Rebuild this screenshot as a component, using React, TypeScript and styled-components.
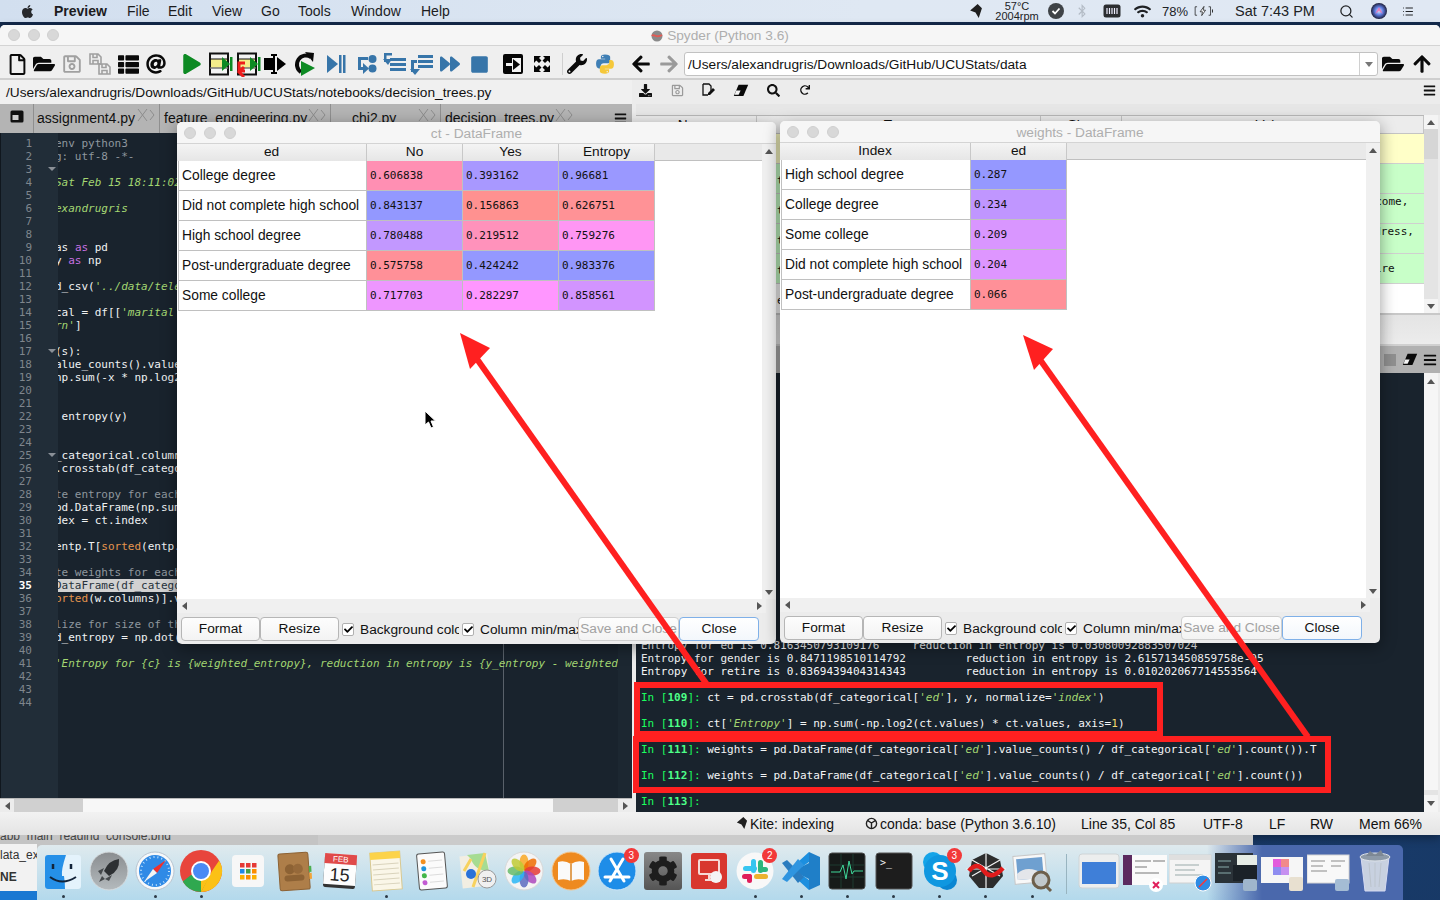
import React, { FC, ReactNode } from 'react';
import styled, { createGlobalStyle } from 'styled-components';
import {
  FaApple,
  FaAt,
  FaBars,
  FaBluetoothB,
  FaCog,
  FaDownload,
  FaFolderOpen,
  FaForward,
  FaPlay,
  FaRedo,
  FaRegFile,
  FaRegSave,
  FaSearch,
  FaStop,
  FaThList,
  FaWifi,
  FaWrench,
  FaArrowLeft,
  FaArrowRight,
  FaArrowUp,
  FaCheck
} from 'react-icons/fa';
import { Search, List } from 'lucide-react';

const SANS = "'Liberation Sans', Arial, sans-serif";
const MONO = "'DejaVu Sans Mono', 'Liberation Mono', monospace";

const GlobalStyle = createGlobalStyle`
  html, body { margin: 0; padding: 0; background: #17304f; }
  #root { width: 1440px; height: 900px; overflow: hidden; }
  * { box-sizing: border-box; }
`;

const Desktop = styled.div`
  position: relative;
  width: 1440px;
  height: 900px;
  overflow: hidden;
  font-family: ${SANS};
  background: radial-gradient(circle at 1400px 860px, #183a68, #14294a 60%);
`;

/* ---------- menu bar ---------- */

const MenuBar = styled.div`
  position: absolute;
  top: 0;
  left: 0;
  width: 1440px;
  height: 22px;
  display: flex;
  align-items: center;
  background: linear-gradient(90deg, #d2dfef, #dfe8f3 60%, #e0e8f3);
  color: #1c1c1e;
  font-size: 14px;
`;

const AppleSlot = styled.div`
  width: 54px;
  padding-left: 20px;
  display: flex;
  align-items: center;
  font-size: 15px;
  color: #26282c;
`;

const MenuItem = styled.span<{ $width: number; $bold?: boolean }>`
  width: ${p => p.$width}px;
  font-weight: ${p => (p.$bold ? 700 : 400)};
`;

const StatusTray = styled.div`
  margin-left: auto;
  display: flex;
  align-items: center;
  height: 22px;
  padding-right: 26px;
  color: #202225;
`;

const TraySlot = styled.div<{ $width: number; $muted?: boolean }>`
  flex: none;
  width: ${p => p.$width}px;
  display: flex;
  align-items: center;
  justify-content: center;
  color: ${p => (p.$muted ? '#b4bcc6' : '#202225')};
`;

const TempReadout = styled.div`
  flex: none;
  font-size: 11px;
  line-height: 10px;
  text-align: center;
  width: 54px;
`;

const TrayText = styled.span<{ $size: number }>`
  font-size: ${p => p.$size}px;
  white-space: nowrap;
`;

/* ---------- main window ---------- */

const SpyderWindow = styled.div`
  position: absolute;
  left: 0;
  top: 25px;
  width: 1440px;
  height: 810px;
  display: flex;
  flex-direction: column;
  border-radius: 5px 5px 0 0;
  background: #ececec;
  overflow: hidden;
  box-shadow: 0 3px 10px rgba(0, 0, 0, 0.35);
`;

const TitleBar = styled.div<{ $height: number }>`
  position: relative;
  flex: none;
  height: ${p => p.$height}px;
  padding-top: 1px;
  display: flex;
  align-items: center;
  justify-content: center;
  gap: 4px;
  background: #f6f6f6;
  border-bottom: 1px solid #d4d4d4;
  color: #aeaeae;
  font-size: 13.7px;
`;

const Lights = styled.div<{ $left: number; $gap: number }>`
  position: absolute;
  left: ${p => p.$left}px;
  top: 50%;
  transform: translateY(-50%);
  display: flex;
  gap: ${p => p.$gap}px;
`;

const Light = styled.i`
  display: block;
  width: 12px;
  height: 12px;
  border-radius: 50%;
  background: #d8d8d8;
  border: 1px solid #cfcfcf;
`;

const MainToolbar = styled.div`
  flex: none;
  height: 34px;
  display: flex;
  align-items: center;
  padding: 4px 0 0 3px;
  background: #efefef;
  border-bottom: 2px solid #cfcfcf;
`;

const ToolSlot = styled.div<{ $mark?: number; $color?: string; $size?: number }>`
  flex: none;
  width: 28px;
  height: 28px;
  margin-left: ${p => p.$mark || 0}px;
  display: flex;
  align-items: center;
  justify-content: center;
  color: ${p => p.$color || '#0a0a0a'};
  font-size: ${p => p.$size || 20}px;
`;

const ToolDivider = styled.div`
  flex: none;
  width: 1px;
  height: 22px;
  margin-left: 6px;
  background: #cfcfcf;
`;

const PathCombo = styled.div`
  flex: none;
  width: 694px;
  height: 24px;
  margin-left: 1px;
  display: flex;
  align-items: center;
  justify-content: space-between;
  background: #fff;
  border: 1px solid #c2c2c2;
  border-radius: 3px;
  padding-left: 3px;
  font-size: 13.7px;
  color: #111;
`;

const ComboArrow = styled.div`
  width: 18px;
  height: 22px;
  border-left: 1px solid #d0d0d0;
  display: flex;
  align-items: center;
  justify-content: center;
  &::after {
    content: '';
    border-left: 4px solid transparent;
    border-right: 4px solid transparent;
    border-top: 5px solid #777;
  }
`;

const Panes = styled.div`
  flex: 1;
  display: flex;
  min-height: 0;
`;

const LeftPane = styled.div`
  flex: none;
  width: 632px;
  display: flex;
  flex-direction: column;
`;

const RightPane = styled.div`
  flex: none;
  width: 804px;
  margin-left: 4px;
  display: flex;
  flex-direction: column;
`;

const FilePath = styled.div`
  flex: none;
  height: 24px;
  padding-left: 6px;
  display: flex;
  align-items: center;
  font-size: 13.7px;
  color: #111;
  background: #f0f0f0;
`;

const TabBar = styled.div`
  flex: none;
  height: 29px;
  display: flex;
  background: #b4b4b4;
  position: relative;
  font-size: 14px;
  color: #111;
`;

const BrowseTab = styled.div`
  width: 33px;
  display: flex;
  align-items: flex-start;
  justify-content: center;
  padding-top: 6px;
`;

const EditorTab = styled.div<{ $width: number; $pad: number }>`
  position: relative;
  width: ${p => p.$width}px;
  padding: 6px 0 0 ${p => p.$pad}px;
  border-left: 1px solid #8f8f8f;
  white-space: nowrap;
  &:last-of-type {
    border-right: 1px solid #8f8f8f;
  }
`;

const TabClose = styled.svg`
  position: absolute;
  right: 4px;
  top: 4px;
`;

const TabMenu = styled.div`
  position: absolute;
  left: 614px;
  top: 8px;
  font-size: 13px;
  line-height: 13px;
`;

const Editor = styled.div`
  flex: 1;
  min-height: 0;
  display: flex;
  background: #19232d;
  font-family: ${MONO};
  font-size: 11px;
  line-height: 13px;
  overflow: hidden;
`;

const Gutter = styled.div`
  flex: none;
  width: 58px;
  padding: 4px 0 0 0;
  background: #212d38;
  border-left: 1px solid #10171e;
`;

const LineNumber = styled.div<{ $active?: boolean; $fold?: boolean }>`
  position: relative;
  height: 13px;
  width: 31px;
  text-align: right;
  color: ${p => (p.$active ? '#ffffff' : '#7f868d')};
  font-weight: ${p => (p.$active ? 700 : 400)};
  &::after {
    content: '';
    display: ${p => (p.$fold ? 'block' : 'none')};
    position: absolute;
    left: 47px;
    top: 4px;
    border-left: 4px solid transparent;
    border-right: 4px solid transparent;
    border-top: 4px solid #8a9097;
  }
`;

const CodeArea = styled.div`
  position: relative;
  flex: 1;
  min-width: 0;
  padding-top: 4px;
  overflow: hidden;
  color: #f0f2f3;
`;

const FlagStrip = styled.div`
  flex: none;
  width: 14px;
  background: #1c2731;
`;

const EdgeLine = styled.div`
  position: absolute;
  left: 445px;
  top: 0;
  bottom: 0;
  width: 1px;
  background: #59616a;
`;

const CodeLine = styled.div<{ $active?: boolean }>`
  position: relative;
  height: 13px;
  margin-left: -3px;
  white-space: pre;
  background: ${p => (p.$active ? '#d2d2d2' : 'transparent')};
  color: ${p => (p.$active ? '#26313b' : 'inherit')};
`;

const Kw = styled.span`
  color: #c670e0;
`;
const Str = styled.span`
  color: #a3d672;
  font-style: italic;
`;
const Fn = styled.span`
  color: #e6954e;
`;
const Cm = styled.span`
  color: #8f979e;
`;
const Num = styled.span`
  color: #f5d76e;
`;

const HScroll = styled.div`
  flex: none;
  height: 14px;
  display: flex;
  background: #d6d6d6;
  border-top: 1px solid #b9b9b9;
`;

const ScrollEnd = styled.div<{ $dir: 'left' | 'right' | 'up' | 'down'; $bg?: string; $size?: number }>`
  flex: none;
  width: ${p => (p.$dir === 'up' || p.$dir === 'down' ? '100%' : `${p.$size || 14}px`)};
  height: ${p => (p.$dir === 'up' || p.$dir === 'down' ? `${p.$size || 14}px` : 'auto')};
  display: flex;
  align-items: center;
  justify-content: center;
  background: ${p => p.$bg || '#ececec'};
  &::after {
    content: '';
    border: 4px solid transparent;
    ${p => (p.$dir === 'left' ? 'border-right: 5px solid #555; border-left: 0;' : '')}
    ${p => (p.$dir === 'right' ? 'border-left: 5px solid #555; border-right: 0;' : '')}
    ${p => (p.$dir === 'up' ? 'border-bottom: 5px solid #555; border-top: 0;' : '')}
    ${p => (p.$dir === 'down' ? 'border-top: 5px solid #555; border-bottom: 0;' : '')}
  }
`;

const ScrollTrack = styled.div`
  flex: 1;
  display: flex;
`;

const ScrollGap = styled.div<{ $width: number }>`
  flex: none;
  width: ${p => p.$width}px;
  background: #d0d0d0;
`;

const ScrollThumb = styled.div<{ $width?: number }>`
  flex: ${p => (p.$width ? 'none' : 1)};
  width: ${p => (p.$width ? `${p.$width}px` : 'auto')};
  background: #f7f7f7;
`;

/* ---------- right pane ---------- */

const PaneIcons = styled.div`
  flex: none;
  height: 24px;
  display: flex;
  align-items: center;
  padding-bottom: 4px;
  background: #ececec;
  font-size: 13px;
  color: #111;
`;

const PaneIcon = styled.div<{ $width?: number; $color?: string; $mark?: number }>`
  flex: none;
  width: ${p => p.$width || 32}px;
  margin-left: ${p => p.$mark || 0}px;
  display: flex;
  justify-content: center;
  color: ${p => p.$color || '#111'};
`;

const PaneMenu = styled.div`
  margin-left: auto;
  padding-right: 4px;
  display: flex;
`;

const PaneGap = styled.div`
  flex: none;
  height: 11px;
  background: #e6e6e6;
`;

const VarWrap = styled.div`
  flex: none;
  height: 198px;
  display: flex;
  padding-right: 2px;
  background: #ececec;
`;

const VarTable = styled.div`
  flex: 1;
  display: flex;
  flex-direction: column;
  background: #fff;
  border-top: 1px solid #b8b8b8;
  overflow: hidden;
`;

const VarHead = styled.div`
  flex: none;
  height: 18px;
  display: grid;
  grid-template-columns: 121px 284px 81px 1fr;
  background: #ececec;
  border-bottom: 1px solid #c4c4c4;
  font-size: 13.7px;
  color: #111;
`;

const VarHeadCell = styled.div`
  text-align: center;
  padding-top: 1px;
  border-right: 1px solid #c4c4c4;
`;

const VarRow = styled.div<{ $bg: string }>`
  flex: none;
  height: 30px;
  display: grid;
  grid-template-columns: 121px 284px 81px 1fr;
  background: ${p => p.$bg};
  border-bottom: 1px solid #d0d0d0;
  font-family: ${MONO};
  font-size: 11px;
  color: #111;
`;

const VarCell = styled.div<{ $pad?: number; $top?: number }>`
  padding-left: ${p => p.$pad || 0}px;
  padding-top: ${p => p.$top || 8}px;
  white-space: nowrap;
  overflow: hidden;
`;

const VScroll = styled.div<{ $bg?: string }>`
  flex: none;
  width: 14px;
  display: flex;
  flex-direction: column;
  background: ${p => p.$bg || '#e4e4e4'};
  align-items: center;
`;

const VThumb = styled.div<{ $height: number; $bg?: string }>`
  flex: none;
  width: 14px;
  height: ${p => p.$height}px;
  background: ${p => p.$bg || '#f6f6f6'};
`;

const VFill = styled.div`
  flex: 1;
  width: 14px;
`;

const PaneTabs = styled.div`
  flex: none;
  height: 33px;
  background: linear-gradient(#e4e4e4, #ececec);
  border-top: 2px solid #c8c8c8;
  border-bottom: 2px solid #d0d0d0;
`;

const ConsoleTools = styled.div`
  flex: none;
  height: 27px;
  display: flex;
  align-items: center;
  justify-content: flex-end;
  gap: 5px;
  padding-right: 3px;
  background: #b1b1b1;
  font-size: 14px;
  color: #0a0a0a;
`;

const GreySquare = styled.div`
  width: 12px;
  height: 12px;
  background: #8f8f8f;
  margin-right: 1px;
`;

const ConsoleWrap = styled.div`
  flex: 1;
  min-height: 0;
  display: flex;
  padding-right: 2px;
  background: #ececec;
`;

const ConsoleBody = styled.div`
  flex: 1;
  display: flex;
  flex-direction: column;
  justify-content: flex-end;
  padding: 0 0 4px 5px;
  background: #19232d;
  color: #f4f5f6;
  font-family: ${MONO};
  font-size: 11px;
  line-height: 13px;
  white-space: pre;
  overflow: hidden;
`;

const ConsoleLine = styled.div`
  height: 13px;
`;

const Prompt = styled.span`
  color: #1aff5e;
  b {
    color: #4dff88;
    font-weight: 700;
  }
`;

const StatusBar = styled.div`
  flex: none;
  height: 23px;
  display: flex;
  align-items: center;
  background: linear-gradient(#f2f2f2, #e4e4e4);
  font-size: 14px;
  color: #111;
  padding-left: 735px;
`;

const StatusItem = styled.span<{ $width: number }>`
  flex: none;
  width: ${p => p.$width}px;
  display: flex;
  align-items: center;
  gap: 2px;
  white-space: nowrap;
`;

/* ---------- data frame windows ---------- */

const FrameWindow = styled.div<{ $left: number; $top: number; $width: number; $height: number }>`
  position: absolute;
  left: ${p => p.$left}px;
  top: ${p => p.$top}px;
  width: ${p => p.$width}px;
  height: ${p => p.$height}px;
  display: flex;
  flex-direction: column;
  background: #ececec;
  border-radius: 5px;
  overflow: hidden;
  box-shadow: 0 4px 16px rgba(0, 0, 0, 0.4);
`;

const FrameBody = styled.div`
  flex: 1;
  min-height: 0;
  display: flex;
`;

const FrameTableArea = styled.div`
  flex: 1;
  display: flex;
  flex-direction: column;
  background: #fff;
`;

const FrameHead = styled.div`
  flex: none;
  height: 17px;
  background: #e9e9e9;
  display: flex;
  border-bottom: 1px solid #c0c0c0;
`;

const FrameHeadCell = styled.div<{ $width: number }>`
  flex: none;
  width: ${p => p.$width}px;
  height: 17px;
  font-size: 13.7px;
  line-height: 16px;
  color: #111;
  text-align: center;
  background: linear-gradient(#f4f4f4, #e6e6e6);
  border-right: 1px solid #c8c8c8;
`;

const FrameGrid = styled.div<{ $cols: string }>`
  display: grid;
  grid-template-columns: ${p => p.$cols};
  grid-auto-rows: 30px;
  margin-left: 1px;
  width: max-content;
`;

const LabelCell = styled.div`
  display: flex;
  align-items: center;
  padding-left: 3px;
  font-size: 13.8px;
  color: #111;
  background: #fff;
  border-right: 1px solid #c0c0c0;
  border-bottom: 1px solid #c0c0c0;
  border-left: 1px solid #c0c0c0;
  white-space: nowrap;
`;

const ValueCell = styled.div<{ $bg: string }>`
  display: flex;
  align-items: center;
  padding-left: 3px;
  font-family: ${MONO};
  font-size: 11px;
  color: #111;
  background: ${p => p.$bg};
  border-right: 1px solid #c0c0c0;
  border-bottom: 1px solid #c0c0c0;
`;

const FrameHScroll = styled.div`
  flex: none;
  height: 14px;
  display: flex;
  margin-right: 10px;
  background: #f0f0f0;
`;

const FrameFoot = styled.div`
  flex: none;
  height: 31px;
  display: flex;
  align-items: flex-start;
  padding: 4px 0 0 4px;
`;

const FrameButton = styled.div<{ $width: number; $disabled?: boolean; $focus?: boolean }>`
  flex: none;
  width: ${p => p.$width}px;
  height: 24px;
  line-height: 22px;
  font-size: 13.7px;
  text-align: center;
  white-space: nowrap;
  overflow: hidden;
  color: ${p => (p.$disabled ? '#a2a2a2' : '#111')};
  background: ${p => (p.$focus ? 'linear-gradient(#fff, #f3f7fc)' : 'linear-gradient(#fdfdfd, #f3f3f3)')};
  border: 1px solid ${p => (p.$focus ? '#7fb0e8' : p.$disabled ? '#cfcfcf' : '#b6b6b6')};
  border-radius: 4px;
`;

const CheckItem = styled.div<{ $width: number }>`
  flex: none;
  width: ${p => p.$width}px;
  height: 24px;
  display: flex;
  align-items: center;
  gap: 6px;
  padding-left: 3px;
  font-size: 13.7px;
  color: #111;
  overflow: hidden;
  white-space: nowrap;
`;

const CheckBox = styled.span`
  flex: none;
  width: 12px;
  height: 13px;
  display: flex;
  align-items: center;
  justify-content: center;
  background: #fff;
  border: 1px solid #b0b0b0;
  border-radius: 2px;
  font-size: 9px;
  color: #000;
`;

const Pointer = styled.svg`
  position: absolute;
  left: 424px;
  top: 410px;
`;

/* ---------- annotations ---------- */

const Annotations = styled.svg`
  position: absolute;
  left: 0;
  top: 0;
  pointer-events: none;
`;

/* ---------- behind the dock ---------- */

const BackWindow = styled.div`
  position: absolute;
  left: 0;
  top: 835px;
  width: 1253px;
  height: 65px;
  background: linear-gradient(90deg, #c4c4c4 318px, #cbcbcb 318px);
`;

const FinderSidebar = styled.div`
  position: absolute;
  left: 0;
  top: 9px;
  width: 37px;
  height: 56px;
  background: #f2f2f2;
  font-size: 12px;
  color: #333;
  overflow: hidden;
`;

const FileLabel = styled.div<{ $bold?: boolean; $top: number }>`
  position: absolute;
  left: 0;
  top: ${p => p.$top}px;
  font-weight: ${p => (p.$bold ? 700 : 400)};
  white-space: nowrap;
`;

const SelectedRow = styled.div`
  position: absolute;
  left: 0;
  top: 47px;
  width: 37px;
  height: 9px;
  background: #1a78d2;
`;

const ClippedFile = styled.div`
  position: absolute;
  left: 0;
  top: 0;
  width: 200px;
  height: 5px;
  overflow: hidden;
  font-size: 12px;
  line-height: 2px;
  color: #444;
`;

/* ---------- dock ---------- */

const Dock = styled.div`
  position: absolute;
  left: 37px;
  top: 845px;
  width: 1366px;
  height: 55px;
  display: flex;
  align-items: flex-start;
  padding: 3px 0 0 3px;
  border-radius: 5px 5px 0 0;
  background: linear-gradient(90deg, rgba(74, 104, 172, 0) 1170px, #4a68ac 1225px),
    linear-gradient(#dfeaee, #b3d9ec);
`;

const DockItem = styled.div<{ $dot?: boolean; $width?: number }>`
  position: relative;
  flex: none;
  width: ${p => p.$width || 46.15}px;
  height: 46px;
  display: flex;
  align-items: center;
  justify-content: center;
  &::after {
    content: '';
    display: ${p => (p.$dot ? 'block' : 'none')};
    position: absolute;
    left: 50%;
    bottom: -4px;
    width: 3px;
    height: 3px;
    margin-left: -1.5px;
    border-radius: 50%;
    background: #2c3a46;
  }
`;

const Badge = styled.span`
  position: absolute;
  right: 1px;
  top: 0;
  width: 15px;
  height: 15px;
  border-radius: 50%;
  background: #f2393a;
  color: #fff;
  font-size: 10px;
  line-height: 15px;
  text-align: center;
`;

const DockSep = styled.div`
  flex: none;
  width: 1px;
  height: 40px;
  margin: 6px 9.5px 0 10.5px;
  background: #98b4c0;
`;

const DockTile = styled.div<{ $bg: string; $color: string; $size?: number }>`
  width: ${p => p.$size || 38}px;
  height: ${p => p.$size || 38}px;
  border-radius: 3px;
  display: flex;
  align-items: center;
  justify-content: center;
  background: ${p => p.$bg};
  color: ${p => p.$color};
`;

/* ---------- small icons ---------- */

const RunCellIcon: FC<{ advance?: boolean }> = ({ advance }) => (
  <svg width="28" height="26" viewBox="0 0 28 26">
    <rect x="3" y="2.5" width="18" height="21" fill="#f4f4f4" stroke="#111" strokeWidth="2" />
    <rect x="4" y="8" width="16" height="9" fill="#f4ec8a" />
    <line x1="3" y1="8" x2="21" y2="8" stroke="#111" />
    <line x1="3" y1="17" x2="21" y2="17" stroke="#777" strokeWidth="1.5" />
    <polygon points="15,6 23,13 15,20" fill="#0d8a23" />
    <rect x="23" y="6" width="2.5" height="14" fill="#0d8a23" />
    {advance && (
      <path d="M10 12 H4 V20 H10 M9 16 L4 21 L9 26" fill="none" stroke="#ee1c1c" strokeWidth="3" />
    )}
  </svg>
);

const RunSelectionIcon = () => (
  <svg width="26" height="22" viewBox="0 0 26 22">
    <rect x="2" y="5" width="9" height="12" fill="#000" />
    <polygon points="15,4 24,11 15,18" fill="#000" />
    <path d="M9 2 H15 M12 2 V20 M9 20 H15" stroke="#000" strokeWidth="2" fill="none" />
  </svg>
);

const DebugIcon = () => (
  <svg width="26" height="26" viewBox="0 0 26 26">
    <path d="M20 6 A9 9 0 1 0 10 21" fill="none" stroke="#0a0a0a" strokeWidth="4" />
    <polygon points="14,1 23,2 22,11" fill="#0a0a0a" />
    <polygon points="10,10 24,17 10,25" fill="#0d8a23" />
  </svg>
);

const StepIcon = () => (
  <svg width="22" height="22" viewBox="0 0 22 22" fill="#3775a9">
    <polygon points="2,2 13,11 2,20" />
    <rect x="14" y="2" width="2.5" height="18" />
    <rect x="18" y="2" width="2.5" height="18" />
  </svg>
);

const StepInIcon = () => (
  <svg width="22" height="22" viewBox="0 0 22 22" fill="#3775a9">
    <rect x="2" y="4" width="10" height="3" />
    <rect x="2" y="4" width="3" height="13" />
    <rect x="2" y="14" width="7" height="3" />
    <polygon points="7,10 13,15.5 7,21" />
    <circle cx="16.5" cy="6" r="4" />
    <circle cx="16.5" cy="15.5" r="4" />
  </svg>
);

const StepIntoIcon = () => (
  <svg width="24" height="22" viewBox="0 0 24 22" fill="#3775a9">
    <polygon points="1,0 9,0 9,2.5 3.5,2.5 3.5,9 1,9" />
    <polygon points="0,6 5,12 9,6" />
    <rect x="7" y="5" width="16" height="3" />
    <rect x="7" y="10" width="16" height="3" />
    <rect x="7" y="15" width="16" height="3" />
  </svg>
);

const StepOutIcon = () => (
  <svg width="24" height="24" viewBox="0 0 24 24" fill="#3775a9">
    <rect x="8" y="3" width="15" height="3" />
    <rect x="8" y="8" width="15" height="3" />
    <rect x="8" y="13" width="15" height="3" />
    <rect x="1" y="8" width="3" height="12" />
    <rect x="1" y="8" width="6" height="3" />
    <polygon points="0,17 5,23 10,17" />
  </svg>
);

const MaximizeIcon = () => (
  <svg width="24" height="24" viewBox="0 0 24 24">
    <rect x="2" y="2" width="20" height="20" rx="2" fill="#050505" />
    <rect x="11" y="6" width="9" height="14" fill="#f2f2f2" />
    <rect x="5" y="11" width="7" height="3" fill="#f2f2f2" />
    <polygon points="12,7 19,12.5 12,18" fill="#050505" />
  </svg>
);

const FullscreenIcon = () => (
  <svg width="20" height="20" viewBox="0 0 20 20" fill="#050505">
    <polygon points="2,2 9,2 7,4 9.5,6.5 7,9 4.3,6.5 2,9" />
    <polygon points="18,2 11,2 13,4 10.5,6.5 13,9 15.7,6.5 18,9" />
    <polygon points="2,18 9,18 7,16 9.5,13.5 7,11 4.3,13.5 2,11" />
    <polygon points="18,18 11,18 13,16 10.5,13.5 13,11 15.7,13.5 18,11" />
  </svg>
);

const SaveAllIcon = () => (
  <svg width="24" height="24" viewBox="0 0 24 24" fill="none" stroke="#a0a0a0" strokeWidth="1.6">
    <path d="M2 2 H10 L13 5 V12 H2 Z M5 2 V5.5 H9 V2 M5 12 V8.5 H10 V12" />
    <path d="M11 12 H19 L22 15 V22 H11 Z M14 12 V15.5 H18 V12 M14 22 V18.5 H19 V22" />
  </svg>
);

const EraserIcon: FC<{ size?: number }> = ({ size = 16 }) => (
  <svg width={size} height={size * 0.8} viewBox="0 0 20 16">
    <polygon points="7,1 19,1 13,15 1,15" fill="#0a0a0a" />
    <polygon points="4,8 9.5,8 7,13.5 2,13.5" fill="#f4f4f4" />
  </svg>
);

const DocEditIcon = () => (
  <svg width="14" height="14" viewBox="0 0 14 14">
    <path d="M1 1 H7 L9 3 V8 M1 1 V12 H6" fill="none" stroke="#111" strokeWidth="1.3" />
    <polygon points="11,5 13,7 8,12 6,12 6,10" fill="#111" />
  </svg>
);

const CloseGlyph = () => (
  <TabClose width="18" height="14" viewBox="0 0 18 14" fill="none" stroke="#8c8c8c">
    <path d="M1 1 L10 13 M10 1 L1 13 M13 2 L17 7 L13 12" />
  </TabClose>
);

const SpyderMark = () => (
  <svg width="12" height="12" viewBox="0 0 12 12">
    <circle cx="6" cy="6" r="5.5" fill="#8a8a8a" />
    <path d="M1 6 C3 3 5 9 11 5" stroke="#e25b55" strokeWidth="2" fill="none" />
  </svg>
);

const PythonIcon = () => (
  <svg width="22" height="22" viewBox="0 0 448 512">
    <path
      fill="#3f7fb5"
      d="M224 32c-60 0-96 20-96 56v44h100v16H84c-40 0-68 34-68 104s30 108 68 108h40v-56c0-36 30-64 68-64h96c30 0 56-26 56-56V88c0-34-40-56-120-56zm-52 32a18 18 0 110 36 18 18 0 010-36z"
    />
    <path
      fill="#f5c83a"
      d="M324 164v54c0 38-32 66-68 66h-96c-30 0-56 26-56 56v84c0 32 40 56 120 56 60 0 96-22 96-56v-44H220v-16h144c40 0 68-32 68-104s-30-96-68-96h-40zm-48 256a18 18 0 110 36 18 18 0 010-36z"
    />
  </svg>
);

const KiteMark: FC<{ size?: number }> = ({ size = 13 }) => (
  <svg width={size} height={size} viewBox="0 0 14 14" fill="#1f1f1f">
    <polygon points="2,6 9,0 13,4 10,13 7,8" />
  </svg>
);

const CubeMark = () => (
  <svg width="13" height="13" viewBox="0 0 14 14" fill="none" stroke="#222" strokeWidth="1.5">
    <circle cx="7" cy="7" r="5.5" />
    <path d="M3 4 L7 6.5 L11 4 M7 6.5 V12" />
  </svg>
);

const BatteryGlyph = () => (
  <svg width="26" height="14" viewBox="0 0 26 14" fill="none" stroke="#222">
    <path d="M4 1.5 H1.5 V12.5 H4 M19 1.5 H21.5 V12.5 H19" />
    <path d="M13 1 L8 8 H11 L10 13 L15 6 H12 Z" fill="#fff" />
    <rect x="23.5" y="5" width="1.2" height="4" fill="#222" stroke="none" />
  </svg>
);

const MemGlyph = () => (
  <svg width="18" height="14" viewBox="0 0 18 14">
    <rect x="0.5" y="0.5" width="17" height="13" rx="2.5" fill="#2b2d30" />
    <path d="M4 4 V10 M6.5 4 V10 M9 4 V10 M11.5 4 V10 M14 4 V10" stroke="#eef" strokeWidth="1.2" />
  </svg>
);

const SiriGlyph = () => (
  <svg width="16" height="16" viewBox="0 0 16 16">
    <defs>
      <radialGradient id="siri">
        <stop offset="0" stopColor="#ddeeff" />
        <stop offset="0.5" stopColor="#5f7de0" />
        <stop offset="1" stopColor="#1c1d3a" />
      </radialGradient>
    </defs>
    <circle cx="8" cy="8" r="8" fill="url(#siri)" />
    <path d="M4 11 L8 4 L12 11 L8 8 Z" fill="#f06fb1" opacity="0.8" />
  </svg>
);

const CheckCircleGlyph = () => (
  <svg width="16" height="16" viewBox="0 0 16 16">
    <circle cx="8" cy="8" r="8" fill="#3f4347" />
    <path d="M4.5 8 L7 10.5 L11.5 5.5" stroke="#fff" strokeWidth="1.8" fill="none" />
  </svg>
);

/* ---------- dock icons ---------- */

const FinderIcon = () => (
  <svg width="38" height="38" viewBox="0 0 38 38">
    <rect x="1" y="3" width="36" height="34" rx="3" fill="#e4f3fc" />
    <path d="M4 3 H22 Q17 18 18 24 H20 Q21 31 21 37 H4 Q1 37 1 34 V6 Q1 3 4 3 Z" fill="#2590e8" />
    <path d="M9 12 V17 M27 12 V17" stroke="#12243a" strokeWidth="2.5" />
    <path d="M6 25 Q18 34 32 25" stroke="#12243a" strokeWidth="2" fill="none" />
  </svg>
);

const RocketIcon = () => (
  <svg width="40" height="40" viewBox="0 0 40 40">
    <defs>
      <linearGradient id="lp" x1="0" x2="0" y1="0" y2="1">
        <stop offset="0" stopColor="#8a8d90" />
        <stop offset="1" stopColor="#b4babd" />
      </linearGradient>
    </defs>
    <circle cx="20" cy="20" r="19" fill="url(#lp)" stroke="#d6dbde" />
    <path d="M30 8 Q20 9 15 20 L20 25 Q31 20 30 8 Z" fill="#2d3033" />
    <path d="M15 17 L9 20 L12 24 Z M23 24 L20 30 L16 28 Z M13 25 L10 31 L16 28 Z" fill="#45494c" />
  </svg>
);

const SafariIcon = () => (
  <svg width="40" height="40" viewBox="0 0 40 40">
    <circle cx="20" cy="20" r="19" fill="#f6f8fa" stroke="#b8c4d0" />
    <circle cx="20" cy="20" r="16" fill="#2f8ae6" />
    <circle cx="20" cy="20" r="14" fill="none" stroke="#bfe0fb" strokeDasharray="1 3" strokeWidth="2" />
    <polygon points="31,9 22,22 18,18" fill="#f0302c" />
    <polygon points="9,31 22,22 18,18" fill="#f4f4f4" />
  </svg>
);

const ChromeIcon = () => (
  <svg width="44" height="44" viewBox="0 0 44 44">
    <circle cx="22" cy="22" r="21" fill="#e8453c" />
    <path d="M3.8 32.5 A21 21 0 0 0 22 43 L32 26 L12 26 Z" fill="#2fa84f" />
    <path d="M40.2 11.5 A21 21 0 0 1 22 43 L33 22 Z M22 12 H40" fill="#fbc116" />
    <path d="M22 43 L31 27 L22 30 Z" fill="#fbc116" />
    <circle cx="22" cy="22" r="10" fill="#fff" />
    <circle cx="22" cy="22" r="8" fill="#4a8af4" />
  </svg>
);

const GridAppIcon = () => (
  <svg width="34" height="34" viewBox="0 0 34 34">
    <rect x="1" y="1" width="32" height="32" rx="4" fill="#f7f7f7" />
    {['#e53935', '#e53935', '#e53935', '#1e88e5', '#43a047', '#fb8c00', '#fbb000', '#fb8c00', '#fbb000'].map((c, i) => (
      <rect key={i} x={9 + (i % 3) * 6} y={9 + Math.floor(i / 3) * 6} width="4.5" height="4.5" fill={c} />
    ))}
  </svg>
);

const ContactsIcon = () => (
  <svg width="38" height="44" viewBox="0 0 38 44">
    <g transform="rotate(-4 19 22)">
      <rect x="4" y="4" width="30" height="37" rx="2" fill="#ae7e49" stroke="#8d6234" />
      <circle cx="15" cy="20" r="5" fill="#8d6234" />
      <circle cx="23" cy="20" r="5" fill="#96693a" />
      <rect x="9" y="26" width="20" height="6" rx="3" fill="#8d6234" />
      <rect x="34" y="18" width="2.5" height="6" fill="#4caf50" />
      <rect x="34" y="25" width="2.5" height="6" fill="#f2a43a" />
    </g>
  </svg>
);

const CalendarIcon = () => (
  <svg width="38" height="40" viewBox="0 0 38 40">
    <g transform="rotate(4 19 20)">
      <rect x="3" y="4" width="32" height="33" rx="2" fill="#333" />
      <rect x="3" y="3" width="32" height="31" fill="#fdfdfd" />
      <rect x="3" y="3" width="32" height="10" fill="#e04a4a" />
      <text x="19" y="11" fontSize="8" fill="#fff" textAnchor="middle" fontFamily={SANS}>
        FEB
      </text>
      <text x="19" y="30" fontSize="18" fill="#222" textAnchor="middle" fontFamily={SANS}>
        15
      </text>
    </g>
  </svg>
);

const NotesIcon = () => (
  <svg width="36" height="42" viewBox="0 0 36 42">
    <g transform="rotate(-4 18 21)">
      <rect x="3" y="2" width="30" height="38" fill="#faf6e8" stroke="#d8c890" />
      <rect x="3" y="2" width="30" height="7" fill="#fcd34a" />
      {[14, 19, 24, 29, 34].map(y => (
        <line key={y} x1="5" x2="31" y1={y} y2={y} stroke="#d9d3bc" />
      ))}
    </g>
  </svg>
);

const RemindersIcon = () => (
  <svg width="36" height="42" viewBox="0 0 36 42">
    <g transform="rotate(-5 18 21)">
      <rect x="4" y="3" width="28" height="36" rx="2" fill="#fbfbfb" stroke="#555" />
      <circle cx="10" cy="11" r="2.5" fill="#f18f1e" />
      <circle cx="10" cy="18" r="2.5" fill="#1d93dc" />
      <circle cx="10" cy="25" r="2.5" fill="#43b649" />
      <circle cx="10" cy="32" r="2.5" fill="#c25bd3" />
      {[11, 18, 25, 32].map(y => (
        <line key={y} x1="15" x2="29" y1={y} y2={y} stroke="#dcdcdc" />
      ))}
    </g>
  </svg>
);

const MapsIcon = () => (
  <svg width="38" height="40" viewBox="0 0 38 40">
    <rect x="2" y="4" width="28" height="32" fill="#f2eee2" transform="rotate(-6 16 20)" />
    <path d="M8 4 L26 2 L30 20 Q16 20 12 8 Z" fill="#a6dc92" />
    <path d="M5 20 L12 8 M14 36 L26 2" stroke="#f7d25e" strokeWidth="3" />
    <circle cx="12" cy="23" r="5" fill="#2a72d8" />
    <circle cx="28" cy="28" r="9" fill="#f0f0f0" stroke="#999" />
    <text x="28" y="31" fontSize="8" fill="#555" textAnchor="middle" fontFamily={SANS}>
      3D
    </text>
  </svg>
);

const PhotosIcon = () => (
  <svg width="40" height="40" viewBox="0 0 40 40">
    <circle cx="20" cy="20" r="19" fill="#f4f4f4" stroke="#d8d8d8" />
    {['#f9a825', '#ef6c00', '#e53935', '#ab47bc', '#5c6bc0', '#29b6f6', '#66bb6a', '#c0ca33'].map((c, i) => (
      <ellipse
        key={i}
        cx="20"
        cy="11.5"
        rx="4.5"
        ry="8"
        fill={c}
        opacity="0.85"
        transform={`rotate(${i * 45} 20 20)`}
      />
    ))}
  </svg>
);

const BooksIcon = () => (
  <svg width="40" height="40" viewBox="0 0 40 40">
    <circle cx="20" cy="20" r="19" fill="#ee8a1f" stroke="#f3c792" />
    <path d="M20 13 Q14 9 7 11 V29 Q14 27 20 30 Q26 27 33 29 V11 Q26 9 20 13 Z" fill="#fafafa" />
    <line x1="20" y1="13" x2="20" y2="30" stroke="#d98322" strokeWidth="1.5" />
  </svg>
);

const AppStoreIcon = () => (
  <svg width="40" height="40" viewBox="0 0 40 40">
    <circle cx="20" cy="20" r="19" fill="#1e8de8" stroke="#c9e4f8" />
    <path d="M14 8 L27 30 M26 8 L13 30 M8 26 H32" stroke="#fff" strokeWidth="3" strokeLinecap="round" />
  </svg>
);

const PrefsIcon = () => (
  <DockTile $bg="linear-gradient(#888, #555)" $color="#1d1d1d">
    <FaCog size={30} />
  </DockTile>
);

const RemoteIcon = () => (
  <svg width="38" height="38" viewBox="0 0 38 38">
    <rect x="1" y="1" width="36" height="36" rx="3" fill="#d8372f" />
    <rect x="9" y="8" width="20" height="14" rx="1" fill="none" stroke="#f6d9d6" strokeWidth="2" />
    <path d="M15 28 H24 M19 22 V28" stroke="#f6d9d6" strokeWidth="2" />
    <circle cx="26" cy="25" r="6" fill="#f4f4f4" />
  </svg>
);

const SlackIcon = () => (
  <svg width="38" height="38" viewBox="0 0 38 38">
    <circle cx="19" cy="19" r="18.5" fill="#f8f8f8" />
    <rect x="15" y="7" width="5" height="14" rx="2.5" fill="#36c5f0" />
    <rect x="7" y="14" width="14" height="5" rx="2.5" fill="#36c5f0" />
    <rect x="22" y="8" width="5" height="13" rx="2.5" fill="#2eb67d" />
    <rect x="24" y="15" width="8" height="5" rx="2.5" fill="#2eb67d" />
    <rect x="18" y="22" width="14" height="5" rx="2.5" fill="#ecb22e" />
    <rect x="11" y="22" width="5" height="9" rx="2.5" fill="#e01e5a" />
    <rect x="6" y="22" width="10" height="5" rx="2.5" fill="#e01e5a" />
  </svg>
);

const VsCodeIcon = () => (
  <svg width="42" height="42" viewBox="0 0 42 42">
    <polygon points="29,2 40,7 40,35 29,40 29,29 13,21 29,13" fill="#1f7fc8" />
    <polygon points="29,2 8,21 29,40 29,30 16,21 29,12" fill="#1c8fdf" />
    <polygon points="2,13 7,10 24,27 18,33" fill="#2a7cbf" />
    <polygon points="2,29 7,32 24,15 18,9" fill="#2f95e0" />
  </svg>
);

const ActivityIcon = () => (
  <svg width="38" height="38" viewBox="0 0 38 38">
    <rect x="1" y="1" width="36" height="36" rx="3" fill="#161a19" stroke="#4a4a4a" />
    <path d="M13 2 V36 M25 2 V36 M2 13 H36 M2 25 H36" stroke="#1d3b30" />
    <path d="M3 20 H12 L15 13 L18 27 L21 9 L24 22 L26 19 H35" stroke="#3fd89a" fill="none" />
  </svg>
);

const TerminalIcon = () => (
  <svg width="38" height="38" viewBox="0 0 38 38">
    <rect x="1" y="1" width="36" height="36" rx="3" fill="#1d1d1d" stroke="#555" />
    <text x="5" y="14" fontSize="10" fill="#f2f2f2" fontFamily={MONO}>
      {'>_'}
    </text>
  </svg>
);

const SkypeIcon = () => (
  <svg width="38" height="42" viewBox="0 0 38 42">
    <circle cx="12" cy="12" r="10" fill="#14a4e8" />
    <circle cx="26" cy="30" r="10" fill="#0a86d2" />
    <circle cx="19" cy="21" r="16" fill="#0f97e0" />
    <text x="19" y="30" fontSize="26" fontWeight="700" fill="#fff" textAnchor="middle" fontFamily={SANS}>
      S
    </text>
  </svg>
);

const SpiderIcon = () => (
  <svg width="44" height="44" viewBox="0 0 44 44">
    <polygon points="22,4 36,11 39,27 29,39 15,39 5,27 8,11" fill="#2d2d2d" />
    <path d="M22 4 V39 M8 11 L36 27 M36 11 L8 27 M2 20 H42" stroke="#f4f4f4" strokeWidth="1.2" />
    <path d="M5 22 Q13 12 20 22 T39 19" stroke="#e01b1b" strokeWidth="4.5" fill="none" />
  </svg>
);

const PreviewIcon = () => (
  <svg width="42" height="42" viewBox="0 0 42 42">
    <rect x="3" y="5" width="32" height="28" fill="#f8f8f8" stroke="#c8c8c8" transform="rotate(-5 19 19)" />
    <rect x="6" y="8" width="26" height="21" fill="#6fa0d0" transform="rotate(-5 19 19)" />
    <path d="M6 24 Q16 14 33 24 L33 28 L7 30 Z" fill="#e4e6ea" />
    <circle cx="30" cy="30" r="8" fill="#c0c8cc" stroke="#6d5f4b" strokeWidth="3" />
    <line x1="35" y1="36" x2="40" y2="41" stroke="#6d5f4b" strokeWidth="3" />
  </svg>
);

const WindowThumb: FC<{ variant: number }> = ({ variant }) => {
  switch (variant) {
    case 0:
      return (
        <svg width="42" height="38" viewBox="0 0 42 38">
          <rect x="1" y="2" width="40" height="34" rx="3" fill="#eceeee" stroke="#cfd4d6" />
          <rect x="4" y="10" width="34" height="22" fill="#3f7fd8" />
        </svg>
      );
    case 1:
      return (
        <svg width="44" height="44" viewBox="0 0 44 44">
          <rect x="0" y="6" width="44" height="30" fill="#fafafa" />
          <rect x="0" y="6" width="9" height="30" fill="#5b2a5f" />
          <path d="M12 12 H28 M12 18 H24 M12 24 H36 M30 12 H42" stroke="#777" />
          <circle cx="33" cy="36" r="7" fill="#fff" />
          <path d="M30 33 L36 39 M36 33 L30 39" stroke="#e01e5a" strokeWidth="2" />
        </svg>
      );
    case 2:
      return (
        <svg width="44" height="44" viewBox="0 0 44 44">
          <rect x="0" y="6" width="42" height="28" fill="#f4f4f4" stroke="#d0d0d0" />
          <rect x="0" y="6" width="42" height="5" fill="#dfdfdf" />
          <path d="M6 16 H30 M6 21 H26 M6 26 H34" stroke="#9aa" />
          <circle cx="34" cy="34" r="8" fill="#2e8be4" stroke="#fff" />
          <path d="M38 30 L33 35 L30 38" stroke="#f33" strokeWidth="1.5" />
        </svg>
      );
    case 3:
      return (
        <svg width="44" height="44" viewBox="0 0 44 44">
          <rect x="0" y="4" width="38" height="30" fill="#2a3238" />
          <rect x="22" y="6" width="20" height="24" fill="#e6ece6" />
          <rect x="18" y="16" width="24" height="16" fill="#1b2228" />
          <path d="M3 12 H16 M3 18 H14 M3 24 H16" stroke="#8aa" />
          <rect x="28" y="30" width="14" height="12" rx="2" fill="#9fb6cc" />
        </svg>
      );
    case 4:
      return (
        <svg width="44" height="44" viewBox="0 0 44 44">
          <rect x="0" y="8" width="42" height="26" fill="#f6f6f6" />
          <rect x="12" y="10" width="8" height="8" fill="#e35bdc" />
          <rect x="20" y="10" width="8" height="8" fill="#f28a8a" />
          <rect x="12" y="18" width="8" height="8" fill="#8f8df0" />
          <rect x="20" y="18" width="8" height="8" fill="#c690f0" />
          <rect x="28" y="28" width="14" height="14" rx="2" fill="#e8e0d0" />
        </svg>
      );
    default:
      return (
        <svg width="44" height="44" viewBox="0 0 44 44">
          <rect x="0" y="6" width="42" height="28" fill="#f8f8f8" stroke="#d4d4d4" />
          <path d="M4 12 H18 M4 17 H16 M4 22 H20 M24 12 H38 M24 17 H34" stroke="#8a8a8a" />
          <rect x="28" y="30" width="14" height="12" rx="2" fill="#a4bcd4" />
        </svg>
      );
  }
};

const TrashIcon = () => (
  <svg width="38" height="44" viewBox="0 0 38 44">
    <path d="M5 8 L9 42 H29 L33 8 Z" fill="#dfe4ea" opacity="0.85" stroke="#eef" />
    <ellipse cx="19" cy="8" rx="15" ry="4" fill="#8d9aa8" stroke="#dfe4ea" />
    <path d="M10 7 L14 2 L19 6 L25 1 L28 7" fill="#7d8894" />
    <path d="M13 14 L15 38 M19 14 V38 M25 14 L23 38" stroke="#bcc4cd" />
  </svg>
);

/* ---------- data ---------- */

const codeLines: { [line: number]: ReactNode } = {
  1: <Cm>env python3</Cm>,
  2: <Cm>g: utf-8 -*-</Cm>,
  4: <Str>Sat Feb 15 18:11:02</Str>,
  6: <Str>exandrugris</Str>,
  9: (
    <>
      as <Kw>as</Kw> pd
    </>
  ),
  10: (
    <>
      y <Kw>as</Kw> np
    </>
  ),
  12: (
    <>
      d_csv(<Str>'../data/tele</Str>
    </>
  ),
  14: (
    <>
      cal = df[[<Str>'marital</Str>
    </>
  ),
  15: (
    <>
      <Str>rn'</Str>]
    </>
  ),
  17: '(s):',
  18: 'alue_counts().value',
  19: 'np.sum(-x * np.log2',
  22: ' entropy(y)',
  25: '_categorical.column',
  26: '.crosstab(df_catego',
  28: <Cm>te entropy for each</Cm>,
  29: 'pd.DataFrame(np.sum',
  30: 'dex = ct.index',
  32: (
    <>
      entp.T[<Fn>sorted</Fn>(entp.
    </>
  ),
  34: <Cm>te weights for each</Cm>,
  35: 'DataFrame(df_catego',
  36: (
    <>
      <Fn>orted</Fn>(w.columns)].v
    </>
  ),
  38: <Cm>lize for size of th</Cm>,
  39: 'd_entropy = np.dot(',
  41: <Str>'Entropy for {'{c}'} is {'{weighted_entropy}'}, reduction in entropy is {'{y_entropy - weighted_'}</Str>
};

const ED = <Str>'ed'</Str>;

const frameCt = [
  { label: 'College degree', cells: [['0.606838', '#ff8fb3'], ['0.393162', '#a898ff'], ['0.96681', '#9a98ff']] },
  { label: 'Did not complete high school', cells: [['0.843137', '#9398ff'], ['0.156863', '#ff9190'], ['0.626751', '#ff9296']] },
  { label: 'High school degree', cells: [['0.780488', '#c298ff'], ['0.219512', '#ff92bb'], ['0.759276', '#ff96f4']] },
  { label: 'Post-undergraduate degree', cells: [['0.575758', '#ff9098'], ['0.424242', '#9498ff'], ['0.983376', '#9398ff']] },
  { label: 'Some college', cells: [['0.717703', '#ee96ff'], ['0.282297', '#ff96ff'], ['0.858561', '#d294ff']] }
];

const frameWeights = [
  { label: 'High school degree', cells: [['0.287', '#9598ff']] },
  { label: 'College degree', cells: [['0.234', '#c096ff']] },
  { label: 'Some college', cells: [['0.209', '#d996ff']] },
  { label: 'Did not complete high school', cells: [['0.204', '#de96ff']] },
  { label: 'Post-undergraduate degree', cells: [['0.066', '#ff9098']] }
];

const varRows = [
  { bg: '#ffffc8', type: '', value: '', top: 8, pad: 240 },
  { bg: '#c8ffc8', type: 't', value: '', top: 8, pad: 240 },
  { bg: '#c8ffc8', type: 't', value: 'income,', top: 1, pad: 240 },
  { bg: '#c8ffc8', type: 't', value: 'address,', top: 1, pad: 239 },
  { bg: '#c8ffc8', type: 't', value: 'retire', top: 8, pad: 233 },
  { bg: '#ffffff', type: 'e', value: '', top: 8, pad: 240 }
];

interface FrameProps {
  title: string;
  left: number;
  top: number;
  height: number;
  width: number;
  headers: { label: string; width: number }[];
  rows: { label: string; cells: string[][] }[];
  cols: string;
}

const DataFrameWindow: FC<FrameProps> = ({ title, left, top, width, height, headers, rows, cols }) => (
  <FrameWindow $left={left} $top={top} $width={width} $height={height}>
    <TitleBar $height={22}>
      <Lights $left={7} $gap={8}>
        <Light />
        <Light />
        <Light />
      </Lights>
      {title}
    </TitleBar>
    <FrameBody>
      <FrameTableArea>
        <FrameHead>
          {headers.map(h => (
            <FrameHeadCell key={h.label} $width={h.width}>
              {h.label}
            </FrameHeadCell>
          ))}
        </FrameHead>
        <FrameGrid $cols={cols}>
          {rows.map(r => (
            <React.Fragment key={r.label}>
              <LabelCell>{r.label}</LabelCell>
              {r.cells.map(([v, bg]) => (
                <ValueCell key={v} $bg={bg}>
                  {v}
                </ValueCell>
              ))}
            </React.Fragment>
          ))}
        </FrameGrid>
      </FrameTableArea>
      <VScroll $bg="#f0f0f0">
        <ScrollEnd $dir="up" $bg="#f0f0f0" />
        <VFill />
        <ScrollEnd $dir="down" $bg="#f0f0f0" />
      </VScroll>
    </FrameBody>
    <FrameHScroll>
      <ScrollEnd $dir="left" $bg="#f0f0f0" />
      <ScrollTrack />
      <ScrollEnd $dir="right" $bg="#f0f0f0" />
    </FrameHScroll>
    <FrameFoot>
      <FrameButton $width={79}>Format</FrameButton>
      <FrameButton $width={79}>Resize</FrameButton>
      <CheckItem $width={120}>
        <CheckBox>
          <FaCheck />
        </CheckBox>
        Background color
      </CheckItem>
      <CheckItem $width={119}>
        <CheckBox>
          <FaCheck />
        </CheckBox>
        Column min/max
      </CheckItem>
      <FrameButton $width={101} $disabled>
        Save and Close
      </FrameButton>
      <FrameButton $width={80} $focus>
        Close
      </FrameButton>
    </FrameFoot>
  </FrameWindow>
);

const lineNumbers = Array.from({ length: 44 }, (_, i) => i + 1);

const App: FC = () => (
  <Desktop>
    <GlobalStyle />

    <MenuBar>
      <AppleSlot>
        <FaApple />
      </AppleSlot>
      <MenuItem $width={73} $bold>
        Preview
      </MenuItem>
      <MenuItem $width={41}>File</MenuItem>
      <MenuItem $width={44}>Edit</MenuItem>
      <MenuItem $width={49}>View</MenuItem>
      <MenuItem $width={37}>Go</MenuItem>
      <MenuItem $width={53}>Tools</MenuItem>
      <MenuItem $width={70}>Window</MenuItem>
      <MenuItem $width={40}>Help</MenuItem>
      <StatusTray>
        <TraySlot $width={30}>
          <KiteMark size={15} />
        </TraySlot>
        <TempReadout>
          57°C
          <br />
          2004rpm
        </TempReadout>
        <TraySlot $width={24}>
          <CheckCircleGlyph />
        </TraySlot>
        <TraySlot $width={28} $muted>
          <FaBluetoothB size={14} />
        </TraySlot>
        <TraySlot $width={32}>
          <MemGlyph />
        </TraySlot>
        <TraySlot $width={28}>
          <FaWifi size={17} />
        </TraySlot>
        <TraySlot $width={38}>
          <TrayText $size={13}>78%</TrayText>
        </TraySlot>
        <TraySlot $width={20}>
          <BatteryGlyph />
        </TraySlot>
        <TraySlot $width={122}>
          <TrayText $size={14.5}>Sat 7:43 PM</TrayText>
        </TraySlot>
        <TraySlot $width={20}>
          <Search size={15} />
        </TraySlot>
        <TraySlot $width={46}>
          <SiriGlyph />
        </TraySlot>
        <TraySlot $width={12}>
          <List size={17} />
        </TraySlot>
      </StatusTray>
    </MenuBar>

    <SpyderWindow>
      <TitleBar $height={21}>
        <Lights $left={8} $gap={7.5}>
          <Light />
          <Light />
          <Light />
        </Lights>
        <SpyderMark />
        Spyder (Python 3.6)
      </TitleBar>

      <MainToolbar>
        <ToolSlot $size={21}>
          <FaRegFile />
        </ToolSlot>
        <ToolSlot $mark={-1} $size={22}>
          <FaFolderOpen />
        </ToolSlot>
        <ToolSlot $color="#a0a0a0">
          <FaRegSave />
        </ToolSlot>
        <ToolSlot>
          <SaveAllIcon />
        </ToolSlot>
        <ToolSlot $size={21}>
          <FaThList />
        </ToolSlot>
        <ToolSlot>
          <FaAt />
        </ToolSlot>
        <ToolSlot $mark={8} $color="#0d8a23">
          <FaPlay />
        </ToolSlot>
        <ToolSlot $mark={1}>
          <RunCellIcon />
        </ToolSlot>
        <ToolSlot>
          <RunCellIcon advance />
        </ToolSlot>
        <ToolSlot $mark={-2}>
          <RunSelectionIcon />
        </ToolSlot>
        <ToolSlot $mark={1}>
          <DebugIcon />
        </ToolSlot>
        <ToolSlot $mark={4}>
          <StepIcon />
        </ToolSlot>
        <ToolSlot $mark={3}>
          <StepInIcon />
        </ToolSlot>
        <ToolSlot>
          <StepIntoIcon />
        </ToolSlot>
        <ToolSlot $mark={-1}>
          <StepOutIcon />
        </ToolSlot>
        <ToolSlot $color="#3775a9">
          <FaForward />
        </ToolSlot>
        <ToolSlot $mark={1} $color="#3775a9" $size={19}>
          <FaStop />
        </ToolSlot>
        <ToolSlot $mark={6}>
          <MaximizeIcon />
        </ToolSlot>
        <ToolSlot $mark={1}>
          <FullscreenIcon />
        </ToolSlot>
        <ToolDivider />
        <ToolSlot>
          <FaWrench />
        </ToolSlot>
        <ToolSlot>
          <PythonIcon />
        </ToolSlot>
        <ToolSlot $mark={8}>
          <FaArrowLeft />
        </ToolSlot>
        <ToolSlot $color="#9a9a9a">
          <FaArrowRight />
        </ToolSlot>
        <PathCombo>
          /Users/alexandrugris/Downloads/GitHub/UCUStats/data
          <ComboArrow />
        </PathCombo>
        <ToolSlot $size={22} $mark={1}>
          <FaFolderOpen />
        </ToolSlot>
        <ToolSlot $mark={1}>
          <FaArrowUp />
        </ToolSlot>
      </MainToolbar>

      <Panes>
        <LeftPane>
          <FilePath>/Users/alexandrugris/Downloads/GitHub/UCUStats/notebooks/decision_trees.py</FilePath>
          <TabBar>
            <BrowseTab>
              <svg width="14" height="13" viewBox="0 0 14 13">
                <rect x="0.5" y="0.5" width="13" height="12" rx="1.5" fill="#111" />
                <rect x="2.5" y="5" width="6" height="5" fill="#cfcfcf" />
              </svg>
            </BrowseTab>
            <EditorTab $width={126} $pad={3}>
              assignment4.py
              <CloseGlyph />
            </EditorTab>
            <EditorTab $width={171} $pad={4}>
              feature_engineering.py
              <CloseGlyph />
            </EditorTab>
            <EditorTab $width={110} $pad={21}>
              chi2.py
              <CloseGlyph />
            </EditorTab>
            <EditorTab $width={137} $pad={4}>
              decision_trees.py
              <CloseGlyph />
            </EditorTab>
            <TabMenu>
              <FaBars />
            </TabMenu>
          </TabBar>
          <Editor>
            <Gutter>
              {lineNumbers.map(n => (
                <LineNumber key={n} $active={n === 35} $fold={n === 3 || n === 17 || n === 25}>
                  {n}
                </LineNumber>
              ))}
            </Gutter>
            <CodeArea>
              <EdgeLine />
              {lineNumbers.map(n => (
                <CodeLine key={n} $active={n === 35}>
                  {codeLines[n] || ' '}
                </CodeLine>
              ))}
            </CodeArea>
            <FlagStrip />
          </Editor>
          <HScroll>
            <ScrollEnd $dir="left" />
            <ScrollTrack>
              <ScrollGap $width={69} />
              <ScrollThumb $width={470} />
              <ScrollGap $width={65} />
            </ScrollTrack>
            <ScrollEnd $dir="right" />
          </HScroll>
        </LeftPane>

        <RightPane>
          <PaneIcons>
            <PaneIcon $width={18}>
              <FaDownload />
            </PaneIcon>
            <PaneIcon $mark={7} $color="#9a9a9a">
              <FaRegSave />
            </PaneIcon>
            <PaneIcon>
              <DocEditIcon />
            </PaneIcon>
            <PaneIcon>
              <EraserIcon />
            </PaneIcon>
            <PaneIcon>
              <FaSearch />
            </PaneIcon>
            <PaneIcon>
              <FaRedo size={10} />
            </PaneIcon>
            <PaneMenu>
              <FaBars />
            </PaneMenu>
          </PaneIcons>
          <PaneGap />
          <VarWrap>
            <VarTable>
              <VarHead>
                <VarHeadCell>Name</VarHeadCell>
                <VarHeadCell>Type</VarHeadCell>
                <VarHeadCell>Size</VarHeadCell>
                <VarHeadCell>Value</VarHeadCell>
              </VarHead>
              {varRows.map((r, i) => (
                <VarRow key={i} $bg={r.bg}>
                  <VarCell />
                  <VarCell $pad={20} $top={10}>
                    {r.type}
                  </VarCell>
                  <VarCell />
                  <VarCell $pad={r.pad} $top={r.top}>
                    {r.value}
                  </VarCell>
                </VarRow>
              ))}
            </VarTable>
            <VScroll>
              <ScrollEnd $dir="up" $bg="#f4f4f4" />
              <VThumb $height={30} $bg="#d6d6d6" />
              <VFill />
              <ScrollEnd $dir="down" $bg="#f4f4f4" />
            </VScroll>
          </VarWrap>
          <PaneTabs />
          <ConsoleTools>
            <GreySquare />
            <EraserIcon />
            <FaBars />
          </ConsoleTools>
          <ConsoleWrap>
            <ConsoleBody>
              <ConsoleLine>Entropy for ed is 0.8163450793109176     reduction in entropy is 0.03080092883507024</ConsoleLine>
              <ConsoleLine>Entropy for gender is 0.8471198510114792         reduction in entropy is 2.615713450859758e-05</ConsoleLine>
              <ConsoleLine>Entropy for retire is 0.8369439404314343         reduction in entropy is 0.010202067714553564</ConsoleLine>
              <ConsoleLine> </ConsoleLine>
              <ConsoleLine>
                <Prompt>
                  In [<b>109</b>]:
                </Prompt>{' '}
                ct = pd.crosstab(df_categorical[{ED}], y, normalize=<Str>'index'</Str>)
              </ConsoleLine>
              <ConsoleLine> </ConsoleLine>
              <ConsoleLine>
                <Prompt>
                  In [<b>110</b>]:
                </Prompt>{' '}
                ct[<Str>'Entropy'</Str>] = np.sum(-np.log2(ct.values) * ct.values, axis=<Num>1</Num>)
              </ConsoleLine>
              <ConsoleLine> </ConsoleLine>
              <ConsoleLine>
                <Prompt>
                  In [<b>111</b>]:
                </Prompt>{' '}
                weights = pd.DataFrame(df_categorical[{ED}].value_counts() / df_categorical[{ED}].count()).T
              </ConsoleLine>
              <ConsoleLine> </ConsoleLine>
              <ConsoleLine>
                <Prompt>
                  In [<b>112</b>]:
                </Prompt>{' '}
                weights = pd.DataFrame(df_categorical[{ED}].value_counts() / df_categorical[{ED}].count())
              </ConsoleLine>
              <ConsoleLine> </ConsoleLine>
              <ConsoleLine>
                <Prompt>
                  In [<b>113</b>]:
                </Prompt>
              </ConsoleLine>
            </ConsoleBody>
            <VScroll>
              <ScrollEnd $dir="up" $bg="#f4f4f4" $size={17} />
              <VThumb $height={400} />
              <VFill />
              <ScrollEnd $dir="down" $bg="#f4f4f4" $size={17} />
            </VScroll>
          </ConsoleWrap>
        </RightPane>
      </Panes>

      <StatusBar>
        <StatusItem $width={130}>
          <KiteMark />
          Kite: indexing
        </StatusItem>
        <StatusItem $width={216}>
          <CubeMark />
          conda: base (Python 3.6.10)
        </StatusItem>
        <StatusItem $width={122}>Line 35, Col 85</StatusItem>
        <StatusItem $width={66}>UTF-8</StatusItem>
        <StatusItem $width={41}>LF</StatusItem>
        <StatusItem $width={49}>RW</StatusItem>
        <StatusItem $width={70}>Mem 66%</StatusItem>
      </StatusBar>
    </SpyderWindow>

    <DataFrameWindow
      title="ct - DataFrame"
      left={177}
      top={122}
      width={599}
      height={522}
      headers={[
        { label: 'ed', width: 190 },
        { label: 'No', width: 96 },
        { label: 'Yes', width: 96 },
        { label: 'Entropy', width: 96 }
      ]}
      cols="189px 96px 96px 96px"
      rows={frameCt}
    />

    <DataFrameWindow
      title="weights - DataFrame"
      left={780}
      top={121}
      width={600}
      height={522}
      headers={[
        { label: 'Index', width: 191 },
        { label: 'ed', width: 96 }
      ]}
      cols="190px 96px"
      rows={frameWeights}
    />

    <Pointer width="14" height="20" viewBox="0 0 14 20">
      <path d="M1 1 L1 15 L4.5 12 L7 18 L9.5 17 L7 11 L11.5 11 Z" fill="#000" stroke="#fff" strokeWidth="1" />
    </Pointer>

    <Annotations width="1440" height="900" viewBox="0 0 1440 900">
      <rect x="637" y="685" width="523" height="49" fill="none" stroke="#ff2020" strokeWidth="6" />
      <rect x="636" y="739" width="692" height="51" fill="none" stroke="#ff2020" strokeWidth="6" />
      <line x1="708" y1="686" x2="472" y2="352" stroke="#ff2020" strokeWidth="6" />
      <polygon points="460,333 490,348 470,369" fill="#ff2020" />
      <line x1="1308" y1="737" x2="1036" y2="354" stroke="#ff2020" strokeWidth="6" />
      <polygon points="1023,335 1053,349 1034,370" fill="#ff2020" />
    </Annotations>

    <BackWindow>
      <ClippedFile>app_main_reading_console.png</ClippedFile>
      <FinderSidebar>
        <FileLabel $top={4}>lata_ex</FileLabel>
        <FileLabel $top={26} $bold>
          NE
        </FileLabel>
        <SelectedRow />
      </FinderSidebar>
    </BackWindow>

    <Dock>
      <DockItem $dot>
        <FinderIcon />
      </DockItem>
      <DockItem>
        <RocketIcon />
      </DockItem>
      <DockItem $dot>
        <SafariIcon />
      </DockItem>
      <DockItem $dot>
        <ChromeIcon />
      </DockItem>
      <DockItem>
        <GridAppIcon />
      </DockItem>
      <DockItem>
        <ContactsIcon />
      </DockItem>
      <DockItem>
        <CalendarIcon />
      </DockItem>
      <DockItem $dot>
        <NotesIcon />
      </DockItem>
      <DockItem>
        <RemindersIcon />
      </DockItem>
      <DockItem>
        <MapsIcon />
      </DockItem>
      <DockItem>
        <PhotosIcon />
      </DockItem>
      <DockItem>
        <BooksIcon />
      </DockItem>
      <DockItem>
        <AppStoreIcon />
        <Badge>3</Badge>
      </DockItem>
      <DockItem>
        <PrefsIcon />
      </DockItem>
      <DockItem>
        <RemoteIcon />
      </DockItem>
      <DockItem $dot>
        <SlackIcon />
        <Badge>2</Badge>
      </DockItem>
      <DockItem $dot>
        <VsCodeIcon />
      </DockItem>
      <DockItem $dot>
        <ActivityIcon />
      </DockItem>
      <DockItem $dot>
        <TerminalIcon />
      </DockItem>
      <DockItem $dot>
        <SkypeIcon />
        <Badge>3</Badge>
      </DockItem>
      <DockItem $dot>
        <SpiderIcon />
      </DockItem>
      <DockItem $dot>
        <PreviewIcon />
      </DockItem>
      <DockSep />
      {[0, 1, 2, 3, 4, 5].map(v => (
        <DockItem key={v} $width={46}>
          <WindowThumb variant={v} />
        </DockItem>
      ))}
      <DockItem>
        <TrashIcon />
      </DockItem>
    </Dock>
  </Desktop>
);

export default App;
